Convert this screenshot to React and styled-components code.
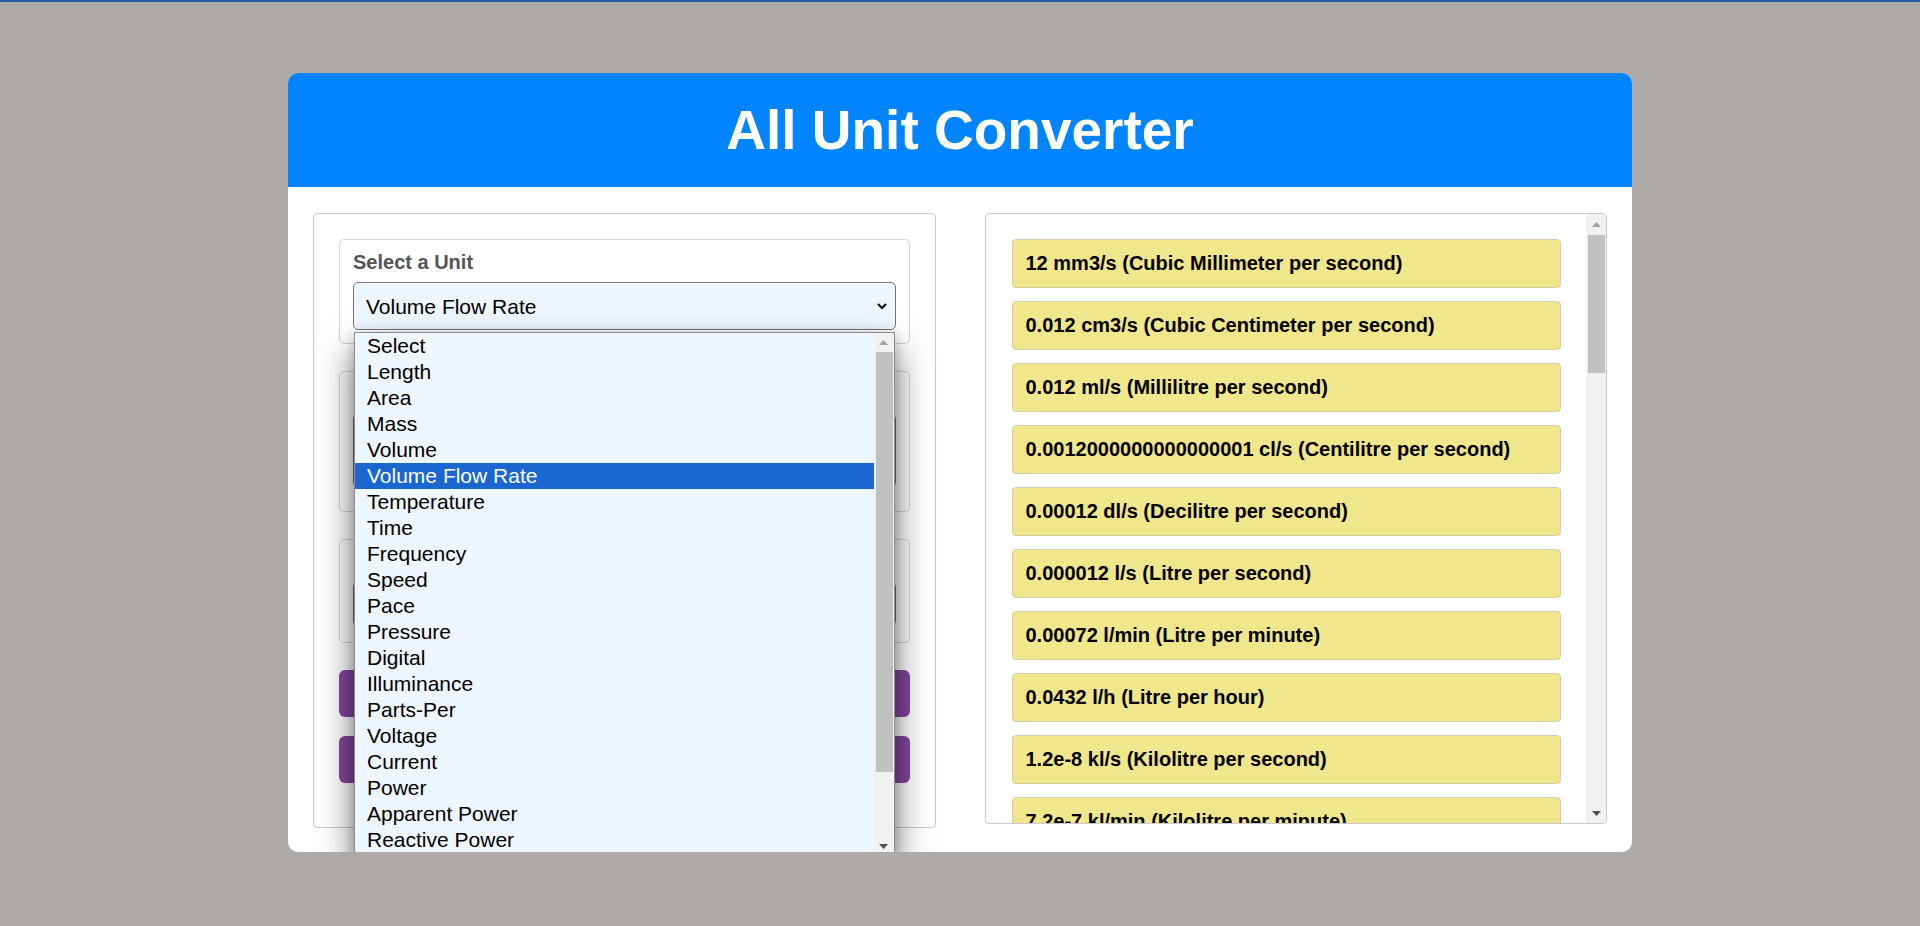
import React from 'react';
import styled, { createGlobalStyle } from 'styled-components'

const GlobalStyle = createGlobalStyle`
    body {
        margin: 0;
        background-color: #adaaa8;
        border-top: 2px solid #2c5ea8;
        font-family: "Liberation Sans", Arial, sans-serif;
    }
    * {
        box-sizing: border-box;
    }
`

const Page = styled.div`
    padding-top: 71px;
`

const ConverterCard = styled.div`
    width: 70%;
    margin: 0 auto;
    background-color: #fff;
    border-radius: 10px;
`

const Header = styled.header`
    display: flex;
    align-items: center;
    justify-content: center;
    height: 114px;
    background-color: #0084ff;
    border-radius: 10px 10px 0 0;
`

const Title = styled.h1`
    margin: 0;
    font-size: 55px;
    font-weight: bold;
    color: #fff;
`

const ConverterBody = styled.div`
    display: grid;
    grid-template-columns: minmax(0, 1fr) minmax(0, 1fr);
    align-items: start;
    column-gap: 49px;
    padding: 26px 25px 24px;
`

const InputPanel = styled.div`
    padding: 25px;
    border: 1px solid #cacaca;
    border-radius: 4px;
`

const FieldCard = styled.div`
    margin-bottom: 27px;
    padding: 11px 13px ${props => props.$padBottom || "13px"};
    border: 1px solid #d6d6d6;
    border-radius: 5px;
`

const FieldLabel = styled.label`
    display: block;
    margin-bottom: 8px;
    font-size: 20px;
    line-height: 23px;
    font-weight: bold;
    color: #555;
`

const SelectWrap = styled.div`
    position: relative;

    .chevron {
        position: absolute;
        right: 9px;
        top: 50%;
        margin-top: -3px;
    }
`

const UnitSelect = styled.select`
    appearance: none;
    display: block;
    width: 100%;
    height: ${props => props.$tall ? "48px" : "44px"};
    padding: 0 30px 0 12px;
    font-family: inherit;
    font-size: 21px;
    color: #000;
    background-color: #eef6ff;
    border: 1px solid #767676;
    border-radius: 5px;
    outline: none;
`

const ValueInput = styled.input`
    display: block;
    width: 100%;
    height: 73px;
    padding: 0 12px;
    font-family: inherit;
    font-size: 21px;
    background-color: #eef6ff;
    border: 1px solid #767676;
    border-radius: 5px;
`

// the open list of the native select
const OptionList = styled.div`
    position: absolute;
    top: calc(100% + 2px);
    left: 1px;
    right: 1px;
    z-index: 10;
    display: flex;
    height: 524px;
    overflow: hidden;
    background-color: #eef6ff;
    border: 1px solid #8c8c8c;
    border-radius: 0 0 6px 6px;
    box-shadow: 0 18px 36px rgba(0, 0, 0, .55), 0 4px 12px rgba(0, 0, 0, .2);
`

const OptionScroller = styled.ul`
    flex: 1;
    margin: 0;
    padding: 0;
    list-style: none;
    overflow: hidden;
`

const OptionItem = styled.li`
    height: 26px;
    padding-left: 12px;
    font-size: 21px;
    line-height: 26px;
    color: ${props => props.$selected ? "#fff" : "#000"};
    background-color: ${props => props.$selected ? "#1a67d2" : "transparent"};
    white-space: nowrap;
`

const ActionButton = styled.button`
    display: block;
    width: 100%;
    height: 47px;
    margin-bottom: 19px;
    font-family: inherit;
    font-size: 20px;
    font-weight: bold;
    color: #fff;
    background-color: #8447a0;
    border: none;
    border-radius: 6px;
`

const ResultPanel = styled.div`
    display: flex;
    height: 611px;
    overflow: hidden;
    border: 1px solid #cacaca;
    border-radius: 4px;
`

const ResultList = styled.div`
    flex: 1;
    min-width: 0;
    overflow: hidden;
    padding: 25px 25px 0 26px;
`

const ResultEntry = styled.div`
    margin-bottom: 13px;
    padding: 12px 13px;
    font-size: 20px;
    line-height: 23px;
    font-weight: bold;
    color: #000;
    background-color: #f0e68c;
    border: 1px solid #d3cfa6;
    border-radius: 4px;
    white-space: nowrap;
`

const ScrollTrack = styled.div`
    display: flex;
    flex-direction: column;
    flex-shrink: 0;
    width: 20px;
    background-color: #f1f1f1;
`

const ScrollArrow = styled.div`
    display: flex;
    align-items: center;
    justify-content: center;
    height: ${props => props.$size}px;
    flex-shrink: 0;
`

const ScrollRail = styled.div`
    flex: 1;
    padding: 1px 1px 0 2px;
`

const ScrollThumb = styled.div`
    height: ${props => props.$length}px;
    background-color: #c1c1c1;
`

const Scrollbar = ({ arrowSize, thumb }) => (
    <ScrollTrack>
        <ScrollArrow $size={arrowSize}>
            <svg width="9" height="5" viewBox="0 0 9 5">
                <polygon points="0,5 9,5 4.5,0" fill="#a3a3a3" />
            </svg>
        </ScrollArrow>
        <ScrollRail>
            <ScrollThumb $length={thumb} />
        </ScrollRail>
        <ScrollArrow $size={arrowSize}>
            <svg width="9" height="5" viewBox="0 0 9 5">
                <polygon points="0,0 9,0 4.5,5" fill="#505050" />
            </svg>
        </ScrollArrow>
    </ScrollTrack>
)

const unitTypes = [
    "Select", "Length", "Area", "Mass", "Volume", "Volume Flow Rate", "Temperature", "Time",
    "Frequency", "Speed", "Pace", "Pressure", "Digital", "Illuminance", "Parts-Per", "Voltage",
    "Current", "Power", "Apparent Power", "Reactive Power", "Energy", "Reactive Energy",
    "Apparent Energy", "Angle"
]

const results = [
    ["12", "mm3/s", "Cubic Millimeter per second"],
    ["0.012", "cm3/s", "Cubic Centimeter per second"],
    ["0.012", "ml/s", "Millilitre per second"],
    ["0.0012000000000000001", "cl/s", "Centilitre per second"],
    ["0.00012", "dl/s", "Decilitre per second"],
    ["0.000012", "l/s", "Litre per second"],
    ["0.00072", "l/min", "Litre per minute"],
    ["0.0432", "l/h", "Litre per hour"],
    ["1.2e-8", "kl/s", "Kilolitre per second"],
    ["7.2e-7", "kl/min", "Kilolitre per minute"],
    ["0.0000432", "kl/h", "Kilolitre per hour"],
    ["1.2e-8", "m3/s", "Cubic meter per second"],
    ["7.2e-7", "m3/min", "Cubic meter per minute"],
    ["0.0000432", "m3/h", "Cubic meter per hour"]
]

class App extends React.Component {
    constructor(props) {
        super(props)
        this.state = {
            unitType: "Volume Flow Rate",
            value: "12",
            fromUnit: "mm3/s"
        }
    }

    render() {
        const options = unitTypes.map(type => (
            <OptionItem key={type} $selected={type === this.state.unitType}>{type}</OptionItem>
        ))
        const entries = results.map(([amount, unit, name], i) => (
            <ResultEntry key={i}>{amount} {unit} ({name})</ResultEntry>
        ))

        return (
            <Page>
                <GlobalStyle />
                <ConverterCard>
                    <Header>
                        <Title>All Unit Converter</Title>
                    </Header>
                    <ConverterBody>
                        <InputPanel>
                            <FieldCard>
                                <FieldLabel>Select a Unit</FieldLabel>
                                <SelectWrap>
                                    <UnitSelect $tall value={this.state.unitType} onChange={() => {}}>
                                        {unitTypes.map(type => <option key={type}>{type}</option>)}
                                    </UnitSelect>
                                    <svg className="chevron" width="10" height="7" viewBox="0 0 10 7">
                                        <polyline points="1,1 5,5 9,1" fill="none" stroke="#000" strokeWidth="2" />
                                    </svg>
                                    <OptionList>
                                        <OptionScroller>{options}</OptionScroller>
                                        <Scrollbar arrowSize={18} thumb={420} />
                                    </OptionList>
                                </SelectWrap>
                            </FieldCard>
                            <FieldCard $padBottom="24px">
                                <FieldLabel>Enter a Value</FieldLabel>
                                <ValueInput type="number" value={this.state.value} onChange={() => {}} />
                            </FieldCard>
                            <FieldCard $padBottom="16px">
                                <FieldLabel>From Unit</FieldLabel>
                                <SelectWrap>
                                    <UnitSelect value={this.state.fromUnit} onChange={() => {}}>
                                        <option value="mm3/s">mm3/s (Cubic Millimeter per second)</option>
                                    </UnitSelect>
                                </SelectWrap>
                            </FieldCard>
                            <ActionButton>Convert</ActionButton>
                            <ActionButton>Reset</ActionButton>
                        </InputPanel>
                        <ResultPanel>
                            <ResultList>{entries}</ResultList>
                            <Scrollbar arrowSize={20} thumb={138} />
                        </ResultPanel>
                    </ConverterBody>
                </ConverterCard>
            </Page>
        )
    }
}

export default App;
